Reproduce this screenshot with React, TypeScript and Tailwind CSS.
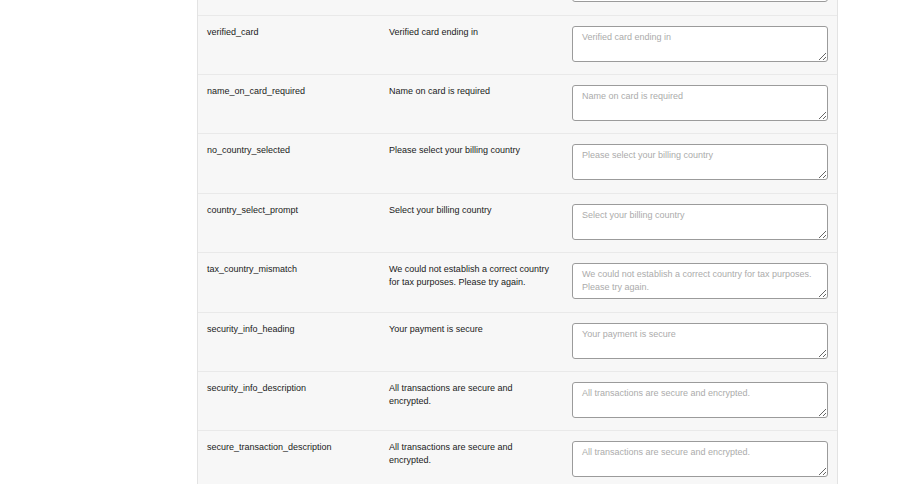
const rows = [
  { key: '', value: '' },
  { key: 'verified_card', value: 'Verified card ending in' },
  { key: 'name_on_card_required', value: 'Name on card is required' },
  { key: 'no_country_selected', value: 'Please select your billing country' },
  { key: 'country_select_prompt', value: 'Select your billing country' },
  { key: 'tax_country_mismatch', value: 'We could not establish a correct country for tax purposes. Please try again.' },
  { key: 'security_info_heading', value: 'Your payment is secure' },
  { key: 'security_info_description', value: 'All transactions are secure and encrypted.' },
  { key: 'secure_transaction_description', value: 'All transactions are secure and encrypted.' },
];

export default function App() {
  return (
    <div className="min-h-screen bg-white overflow-hidden font-['Liberation_Sans',Arial,sans-serif]">
      <div className="ml-[197px] w-[641px] -mt-[43.8px] bg-[#f7f7f7] border-x border-[#e3e3e3]">
        {rows.map((r, i) => (
          <div key={i} className="grid grid-cols-[182px_183px_1fr] h-[59.4px] border-b border-[#e9e9e9] text-[9px] leading-[13px] text-[#1a1a1a]">
            <div className="pl-[9px] pt-[10px]">{r.key}</div>
            <div className="pl-[9px] pr-[8px] pt-[10px]">{r.value}</div>
            <div className="pl-[9px] pr-[9px] pt-[10px]">
              <textarea
                placeholder={r.value}
                className="block w-full h-[36px] bg-white border border-[#9b9b9b] rounded-[3px] pt-[4px] px-[9px] text-[9px] leading-[13px] placeholder:text-[#ababab] outline-none"
              />
            </div>
          </div>
        ))}
      </div>
    </div>
  );
}
